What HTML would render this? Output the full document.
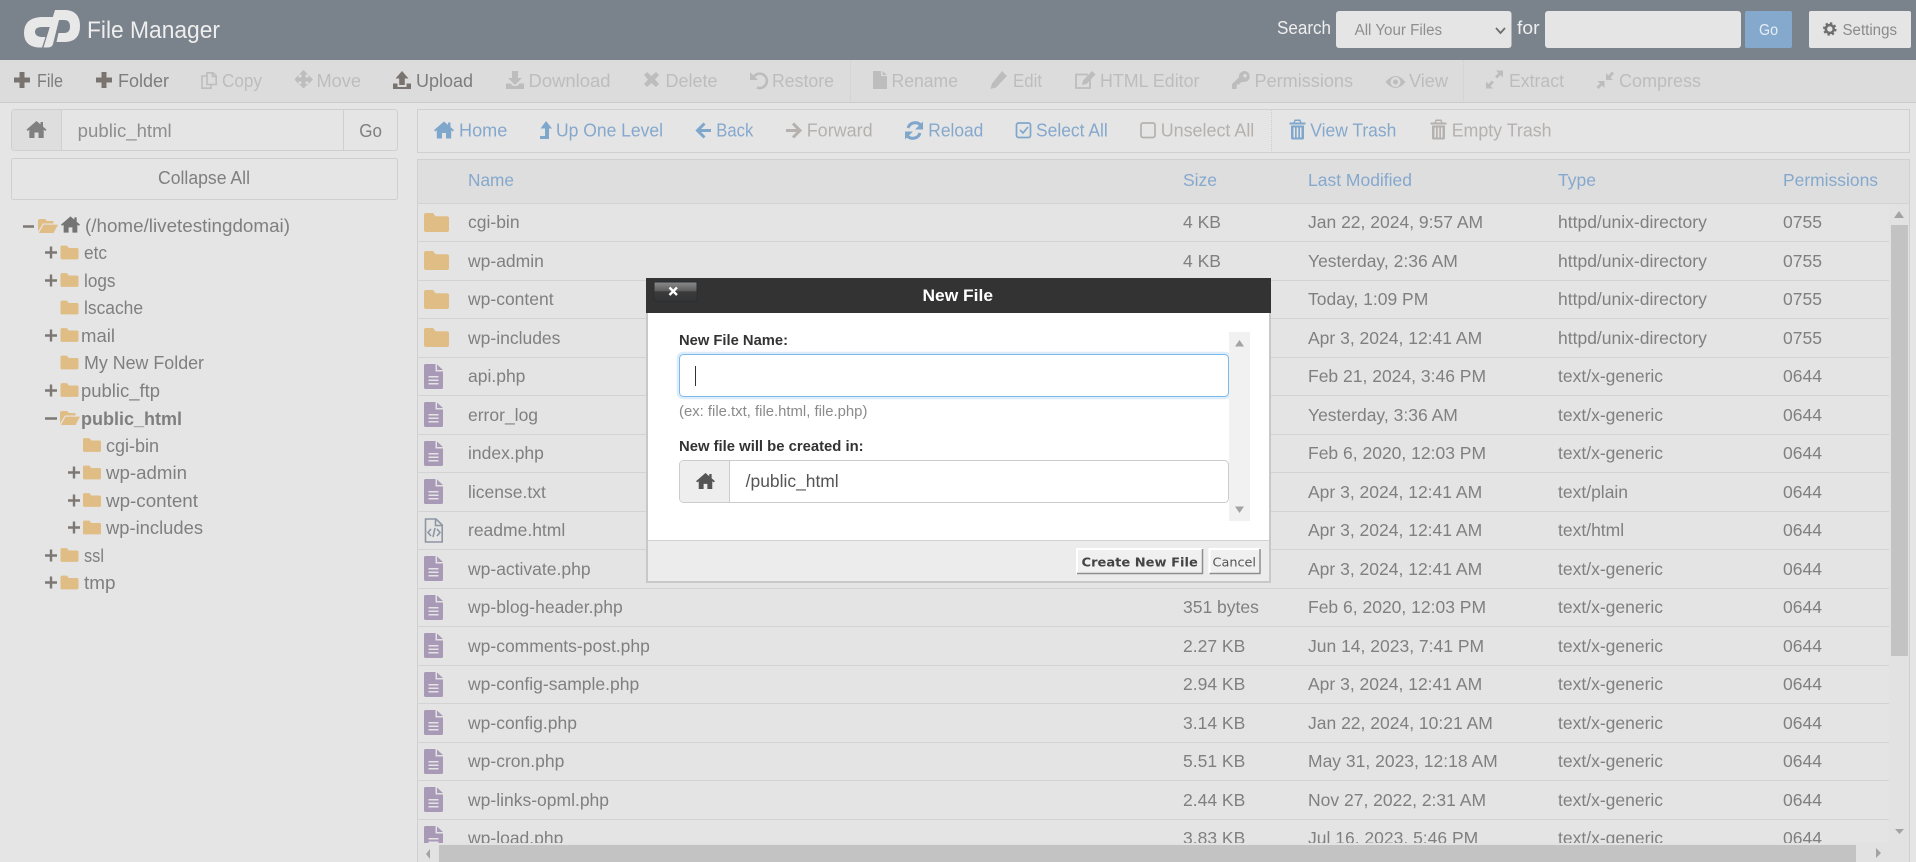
<!DOCTYPE html>
<html lang="en"><head><meta charset="utf-8"><title>File Manager</title>
<style>
html,body{margin:0;padding:0;width:1916px;height:862px;overflow:hidden;background:#e5e5e5}
svg{display:block}
text{font-family:"Liberation Sans",Arial,sans-serif;white-space:pre}
.t{font-size:18px}
.tb{fill:#7d7d7d}.dis{fill:#bdbdbd}.lnk{fill:#85a8cd}.lg{fill:#b4b1ae}
.r{font-size:17.5px;fill:#808080}
.h{font-size:17.5px;fill:#85a8cd}
.tr{font-size:18px;fill:#7f7f7f}
</style></head><body>
<svg xmlns="http://www.w3.org/2000/svg" width="1916" height="862" viewBox="0 0 1916 862">
<defs>
<symbol id="home" viewBox="0 0 20 17"><path d="M10 0L0 8.6 1.2 10 2.8 8.7V17H8V11.5H12V17H17.2V8.7L18.8 10 20 8.6 16.5 5.6V1H14V3.4Z"/></symbol>
<symbol id="file" viewBox="0 0 19 25"><path fill-rule="evenodd" d="M1.5 0H11.5V7.5H19V23.5A1.5 1.5 0 0 1 17.5 25H1.5A1.5 1.5 0 0 1 0 23.5V1.5A1.5 1.5 0 0 1 1.5 0ZM4.5 12V13.5H14.5V12ZM4.5 15.5V17H14.5V15.5ZM4.5 19V20.5H14.5V19Z"/><path d="M13 0.5L19 6H13Z"/></symbol>
<symbol id="folder" viewBox="0 0 25 19"><path d="M2 0H9L11.5 3.2H23A2 2 0 0 1 25 5.2V17A2 2 0 0 1 23 19H2A2 2 0 0 1 0 17V2A2 2 0 0 1 2 0Z"/></symbol>
<symbol id="ofolder" viewBox="0 0 20 14"><path d="M0 2Q0 0 2 0H7L9 2H15.5V4.5H5L0 12.5Z"/><path d="M5.6 5.6H20L15.5 14H0.8Z"/></symbol>
<symbol id="plus" viewBox="0 0 16 16"><path d="M5.5 0H10.5V5.5H16V10.5H10.5V16H5.5V10.5H0V5.5H5.5Z"/></symbol>
<symbol id="trash" viewBox="0 0 16 20"><path fill-rule="evenodd" d="M5 0H11L12 3H16V5H0V3H4ZM6 1.5L5.6 3H10.4L10 1.5ZM1.5 6H14.5V18.5Q14.5 20 13 20H3Q1.5 20 1.5 18.5ZM4 8V18H5.5V8ZM7.2 8V18H8.8V8ZM10.5 8V18H12V8Z"/></symbol>
<clipPath id="tc"><rect x="418" y="204" width="1471" height="639"/></clipPath>
</defs>

<!-- page -->
<rect width="1916" height="862" fill="#e5e5e5"/>

<!-- top bar -->
<rect width="1916" height="60" fill="#7a828c"/>
<g fill="#e8e8e8">
<path d="M56 17H41Q24 18 24 33Q24 46 38 47.5H42L45.5 37H41Q35 36 35 32Q35 27 42 27H53Z"/>
<path d="M55 10H66Q80 11 80 26Q80 41 66 42H56.5L58.5 33H64Q70 33 70 26.5Q70 20 64 20H59L53 44Q52 47.5 48 47.5H43.5Z"/>
</g>
<text x="87" y="38" font-size="24" fill="#eeeeee" textLength="133" lengthAdjust="spacingAndGlyphs">File Manager</text>
<text x="1277" y="34" font-size="18" fill="#eeeeee" textLength="54" lengthAdjust="spacingAndGlyphs">Search</text>
<rect x="1336" y="11" width="175.500" height="37" rx="3" fill="#e5e5e5"/>
<text x="1354.600" y="35" font-size="15.500" fill="#8e8e8e" textLength="87.500" lengthAdjust="spacingAndGlyphs">All Your Files</text>
<path d="M1496 28L1500.500 33 1505 28" fill="none" stroke="#6e6e6e" stroke-width="1.800"/>
<text x="1517" y="34" font-size="18" fill="#eeeeee" textLength="22.500" lengthAdjust="spacingAndGlyphs">for</text>
<rect x="1545" y="11" width="196" height="37" rx="3" fill="#e5e5e5"/>
<rect x="1745" y="11" width="47" height="37" rx="2" fill="#84a9cc"/>
<text x="1759" y="35" font-size="15.500" fill="#e6eef5" textLength="19" lengthAdjust="spacingAndGlyphs">Go</text>
<rect x="1809" y="11" width="102" height="37" rx="2" fill="#e5e5e5"/>
<g fill="none" stroke="#6f6f6f"><circle cx="1829.800" cy="29" r="4" stroke-width="2.600"/><circle cx="1829.800" cy="29" r="5.800" stroke-width="2" stroke-dasharray="2.300 2.250"/></g>
<text x="1842.500" y="35" font-size="15.500" fill="#8a8a8a" textLength="54.500" lengthAdjust="spacingAndGlyphs">Settings</text>

<!-- toolbar -->
<rect y="60" width="1916" height="42" fill="#dcdcdc"/>
<rect y="102" width="1916" height="1" fill="#cbcbcb"/>
<path d="M850.500 60V102M1463.500 60V102" stroke="#cdcdcd" stroke-dasharray="1 1"/>
<g class="t">
<g fill="#7a7471"><use href="#plus" x="14" y="72" width="16" height="16"/><use href="#plus" x="96" y="72" width="16" height="16"/></g>
<text class="t tb" x="37" y="87" textLength="26" lengthAdjust="spacingAndGlyphs">File</text>
<text class="t tb" x="118" y="87" textLength="51" lengthAdjust="spacingAndGlyphs">Folder</text>
<g fill="none" stroke="#bdbdbd" stroke-width="1.600"><path d="M207 72.800H213L216.200 76V84.500H207Z"/><path d="M207 76H202V88.200H211V84.500"/><path d="M212.500 73V76.500H216"/></g>
<text class="t dis" x="222" y="87" textLength="40" lengthAdjust="spacingAndGlyphs">Copy</text>
<path fill="#bdbdbd" d="M303.500 70L308 74.500H305.500V77.500H308.500V75L313 79.500 308.500 84V81.500H305.500V84H308L303.500 88.500 299 84H301.500V81.500H298.500V84L294.500 79.500 298.500 75V77.500H301.500V74.500H299Z"/>
<text class="t dis" x="316.500" y="87" textLength="44.500" lengthAdjust="spacingAndGlyphs">Move</text>
<path fill="#7a7471" d="M402 71L408.500 78.500H404.800V85H399.200V78.500H395.500ZM393 83.500H397.500V87H406.500V83.500H411V89H393Z"/>
<text class="t tb" x="416" y="87" textLength="57" lengthAdjust="spacingAndGlyphs">Upload</text>
<path fill="#bdbdbd" d="M512 71H518V78H522L515 85 508 78H512ZM506 83.500H510.500L513 86H517L519.500 83.500H524V89H506Z"/>
<text class="t dis" x="528.500" y="87" textLength="82" lengthAdjust="spacingAndGlyphs">Download</text>
<path fill="#bdbdbd" d="M647 72L651.500 76 656 72 659 75 655 79.500 659 84 656 87 651.500 83 647 87 644 84 648 79.500 644 75Z"/>
<text class="t dis" x="665.500" y="87" textLength="52" lengthAdjust="spacingAndGlyphs">Delete</text>
<path fill="none" stroke="#bdbdbd" stroke-width="2.600" d="M754 76.500A7.200 7.200 0 1 1 757 87.500"/><path fill="#bdbdbd" d="M750 72V80H758Z"/>
<text class="t dis" x="772" y="87" textLength="62" lengthAdjust="spacingAndGlyphs">Restore</text>
<path fill="#bdbdbd" d="M873 71H881V76H887V89H873ZM882.500 71L887 75H882.500Z"/>
<text class="t dis" x="891.500" y="87" textLength="66.500" lengthAdjust="spacingAndGlyphs">Rename</text>
<path fill="#bdbdbd" d="M1002 71L1007 76 996 87.500 990.500 89 992 83.500Z"/>
<text class="t dis" x="1013" y="87" textLength="29" lengthAdjust="spacingAndGlyphs">Edit</text>
<path fill="none" stroke="#bdbdbd" stroke-width="1.800" d="M1088 74.500H1076V88H1090V79"/><path fill="#bdbdbd" d="M1092 71L1095.500 74.500 1086.500 84 1082 85 1083 80.500Z"/>
<text class="t dis" x="1100" y="87" textLength="99.500" lengthAdjust="spacingAndGlyphs">HTML Editor</text>
<path fill="#bdbdbd" fill-rule="evenodd" d="M1244.500 71A5.500 5.500 0 0 1 1244 82H1241.500L1239 84.500H1237L1236.500 89H1232V84L1238.800 77.500A6 6 0 0 1 1244.500 71ZM1245 74A1.800 1.800 0 1 0 1245 77.600 1.800 1.800 0 0 0 1245 74Z"/>
<text class="t dis" x="1254.500" y="87" textLength="98.500" lengthAdjust="spacingAndGlyphs">Permissions</text>
<path fill="#bdbdbd" fill-rule="evenodd" d="M1385.500 82Q1395.500 70 1405.500 82 1395.500 94 1385.500 82ZM1395.500 77A5 5 0 1 0 1395.500 87 5 5 0 0 0 1395.500 77Z"/><circle cx="1395.500" cy="82" r="2.500" fill="#bdbdbd"/>
<text class="t dis" x="1409" y="87" textLength="39" lengthAdjust="spacingAndGlyphs">View</text>
<path fill="#bdbdbd" d="M1503 70.500V77.500L1500.500 75 1497 78.500 1495 76.500 1498.500 73 1496 70.500ZM1486 88.500V81.500L1488.500 84 1492 80.500 1494 82.500 1490.500 86 1493 88.500Z"/>
<text class="t dis" x="1509" y="87" textLength="55" lengthAdjust="spacingAndGlyphs">Extract</text>
<path fill="#bdbdbd" d="M1606 80V73L1608.500 75.500 1612 71.500 1614 73.500 1610.500 77.500 1613 80ZM1604.500 81V88L1602 85.500 1598.500 89 1596.500 87 1600 83.500 1597.500 81Z"/>
<text class="t dis" x="1619" y="87" textLength="82" lengthAdjust="spacingAndGlyphs">Compress</text>
</g>

<!-- path box -->
<rect x="11.500" y="109.500" width="386" height="41" rx="3" fill="#e5e5e5" stroke="#cfcfcf"/>
<path d="M14.500 110H61.500V150H14.500Q12 150 12 147V113Q12 110 14.500 110Z" fill="#dedede"/>
<path d="M61.500 110V150M343.500 110V150" stroke="#cfcfcf"/>
<use href="#home" x="26.500" y="121" width="20" height="17" fill="#808080"/>
<text class="t" x="77.700" y="137" fill="#8e8e8e" textLength="94" lengthAdjust="spacingAndGlyphs">public_html</text>
<text class="t" x="359.300" y="137" fill="#7f7f7f" textLength="22.700" lengthAdjust="spacingAndGlyphs">Go</text>
<rect x="11.500" y="158.500" width="386" height="41" rx="2" fill="#e5e5e5" stroke="#cfcfcf"/>
<text class="t" x="158" y="184" fill="#7f7f7f" textLength="92" lengthAdjust="spacingAndGlyphs">Collapse All</text>

<!-- tree -->
<g fill="#e0bd85">
<use href="#ofolder" x="38" y="219" width="20" height="14"/>
<use href="#folder" x="60.500" y="245.500" width="18" height="14"/>
<use href="#folder" x="60.500" y="273" width="18" height="14"/>
<use href="#folder" x="60.500" y="300.500" width="18" height="14"/>
<use href="#folder" x="60.500" y="328" width="18" height="14"/>
<use href="#folder" x="60.500" y="355.500" width="18" height="14"/>
<use href="#folder" x="60.500" y="383" width="18" height="14"/>
<use href="#ofolder" x="60" y="411" width="20" height="14"/>
<use href="#folder" x="83" y="438" width="18" height="14"/>
<use href="#folder" x="83" y="465.500" width="18" height="14"/>
<use href="#folder" x="83" y="493" width="18" height="14"/>
<use href="#folder" x="83" y="520.500" width="18" height="14"/>
<use href="#folder" x="60.500" y="548" width="18" height="14"/>
<use href="#folder" x="60.500" y="575.500" width="18" height="14"/>
</g>
<use href="#home" x="61" y="216" width="19" height="17" fill="#747474"/>
<g stroke="#7d7874" stroke-width="2.400" fill="none">
<path d="M23 226.500H34M45 418.500H57"/>
<path d="M45 252.500H57M51 246.500V258.500M45 280.500H57M51 274.500V286.500M45 335.500H57M51 329.500V341.500M45 390.500H57M51 384.500V396.500M45 555.500H57M51 549.500V561.500M45 582.500H57M51 576.500V588.500"/>
<path d="M68 472.500H80M74 466.500V478.500M68 500.500H80M74 494.500V506.500M68 527.500H80M74 521.500V533.500"/>
</g>
<text class="tr" x="85" y="232" textLength="205" lengthAdjust="spacingAndGlyphs">(/home/livetestingdomai)</text>
<text class="tr" x="84" y="259" textLength="23" lengthAdjust="spacingAndGlyphs">etc</text>
<text class="tr" x="84" y="287" textLength="31.500" lengthAdjust="spacingAndGlyphs">logs</text>
<text class="tr" x="84" y="314" textLength="59" lengthAdjust="spacingAndGlyphs">lscache</text>
<text class="tr" x="81" y="342" textLength="34" lengthAdjust="spacingAndGlyphs">mail</text>
<text class="tr" x="84" y="369" textLength="120" lengthAdjust="spacingAndGlyphs">My New Folder</text>
<text class="tr" x="81" y="397" textLength="79" lengthAdjust="spacingAndGlyphs">public_ftp</text>
<text class="tr" x="81" y="425" font-weight="bold" textLength="101" lengthAdjust="spacingAndGlyphs">public_html</text>
<text class="tr" x="106" y="452" textLength="53" lengthAdjust="spacingAndGlyphs">cgi-bin</text>
<text class="tr" x="106" y="479" textLength="81" lengthAdjust="spacingAndGlyphs">wp-admin</text>
<text class="tr" x="106" y="507" textLength="92" lengthAdjust="spacingAndGlyphs">wp-content</text>
<text class="tr" x="106" y="534" textLength="97" lengthAdjust="spacingAndGlyphs">wp-includes</text>
<text class="tr" x="84" y="562" textLength="20" lengthAdjust="spacingAndGlyphs">ssl</text>
<text class="tr" x="84" y="589" textLength="31.500" lengthAdjust="spacingAndGlyphs">tmp</text>

<!-- action bar -->
<rect x="417.500" y="109.500" width="1492" height="43" fill="#e5e5e5" stroke="#d0d0d0"/>
<path d="M1271.500 110V152" stroke="#cdcdcd" stroke-dasharray="1 1"/>
<use href="#home" x="434" y="121.500" width="20" height="17" fill="#7fa7cc"/>
<text class="t lnk" x="459" y="136.500" textLength="48.300" lengthAdjust="spacingAndGlyphs">Home</text>
<path fill="#7fa7cc" d="M546 121L552 128.500H549V139H540V136H545V128.500H540.500Z"/>
<text class="t lnk" x="556" y="136.500" textLength="107" lengthAdjust="spacingAndGlyphs">Up One Level</text>
<path fill="none" stroke="#7fa7cc" stroke-width="3" d="M711 130.500H698M704.500 123.500L697.500 130.500 704.500 137.500"/>
<text class="t lnk" x="716.300" y="136.500" textLength="37" lengthAdjust="spacingAndGlyphs">Back</text>
<path fill="none" stroke="#b4b1ae" stroke-width="3" d="M786 130.500H799.500M793 123.500L800 130.500 793 137.500"/>
<text class="t lg" x="806.700" y="136.500" textLength="66" lengthAdjust="spacingAndGlyphs">Forward</text>
<path fill="none" stroke="#7fa7cc" stroke-width="3" d="M908 128A7.500 7.500 0 0 1 921 125.500M920 133A7.500 7.500 0 0 1 907 135.500"/>
<path fill="#7fa7cc" d="M923 121.500V129.500H915ZM905 139.500V131.500H913Z"/>
<text class="t lnk" x="928.300" y="136.500" textLength="55" lengthAdjust="spacingAndGlyphs">Reload</text>
<rect x="1016.500" y="123" width="14" height="14.500" rx="2" fill="none" stroke="#7fa7cc" stroke-width="1.700"/>
<path d="M1020 130L1023 133 1028 127" fill="none" stroke="#7fa7cc" stroke-width="1.700"/>
<text class="t lnk" x="1036" y="136.500" textLength="71.700" lengthAdjust="spacingAndGlyphs">Select All</text>
<rect x="1141" y="123" width="14" height="14.500" rx="2" fill="none" stroke="#b4b1ae" stroke-width="1.700"/>
<text class="t lg" x="1160.700" y="136.500" textLength="93.600" lengthAdjust="spacingAndGlyphs">Unselect All</text>
<use href="#trash" x="1289.500" y="119.500" width="16" height="20" fill="#7fa7cc"/>
<text class="t lnk" x="1310.300" y="136.500" textLength="86" lengthAdjust="spacingAndGlyphs">View Trash</text>
<use href="#trash" x="1430.500" y="119.500" width="16" height="20" fill="#b4b1ae"/>
<text class="t lg" x="1451.700" y="136.500" textLength="99.800" lengthAdjust="spacingAndGlyphs">Empty Trash</text>

<!-- table -->
<rect x="417.500" y="159.500" width="1492" height="702" fill="#e4e4e4" stroke="#d0d0d0"/>
<rect x="418" y="160" width="1491" height="43" fill="#dedede"/>
<text class="h" x="468" y="186" textLength="46" lengthAdjust="spacingAndGlyphs">Name</text>
<text class="h" x="1183" y="186">Size</text>
<text class="h" x="1308" y="186" textLength="104" lengthAdjust="spacingAndGlyphs">Last Modified</text>
<text class="h" x="1558" y="186">Type</text>
<text class="h" x="1783" y="186" textLength="95" lengthAdjust="spacingAndGlyphs">Permissions</text>
<path stroke="#d3d3d3" d="M418 203.500H1909M418 241.500H1889M418 280.500H1889M418 318.500H1889M418 357.500H1889M418 395.500H1889M418 434.500H1889M418 472.500H1889M418 511.500H1889M418 549.500H1889M418 588.500H1889M418 626.500H1889M418 665.500H1889M418 703.500H1889M418 742.500H1889M418 780.500H1889M418 819.500H1889"/>
<g clip-path="url(#tc)">
<g fill="#e0bd85">
<use href="#folder" x="424" y="213" width="25" height="19"/>
<use href="#folder" x="424" y="251" width="25" height="19"/>
<use href="#folder" x="424" y="290" width="25" height="19"/>
<use href="#folder" x="424" y="328" width="25" height="19"/>
</g>
<g fill="#a899b6">
<use href="#file" x="424" y="364" width="19" height="25"/>
<use href="#file" x="424" y="402" width="19" height="25"/>
<use href="#file" x="424" y="441" width="19" height="25"/>
<use href="#file" x="424" y="479" width="19" height="25"/>
<use href="#file" x="424" y="556" width="19" height="25"/>
<use href="#file" x="424" y="595" width="19" height="25"/>
<use href="#file" x="424" y="633" width="19" height="25"/>
<use href="#file" x="424" y="672" width="19" height="25"/>
<use href="#file" x="424" y="710" width="19" height="25"/>
<use href="#file" x="424" y="749" width="19" height="25"/>
<use href="#file" x="424" y="787" width="19" height="25"/>
<use href="#file" x="424" y="826" width="19" height="25"/>
</g>
<g fill="none" stroke="#8d97a3" stroke-width="1.600">
<path d="M425.500 519H436L442.200 525V542H425.500Z"/><path d="M435.500 519V525.500H442"/>
<path d="M431 529L428 532.500 431 536M437 529L440 532.500 437 536M435 528L433 537"/>
</g>
<g class="r">
<text class="r" x="468" y="228">cgi-bin</text><text class="r" x="468" y="267">wp-admin</text><text class="r" x="468" y="305">wp-content</text><text class="r" x="468" y="344">wp-includes</text><text class="r" x="468" y="382">api.php</text><text class="r" x="468" y="421">error_log</text><text class="r" x="468" y="459">index.php</text><text class="r" x="468" y="498">license.txt</text><text class="r" x="468" y="536">readme.html</text><text class="r" x="468" y="575">wp-activate.php</text><text class="r" x="468" y="613">wp-blog-header.php</text><text class="r" x="468" y="652">wp-comments-post.php</text><text class="r" x="468" y="690">wp-config-sample.php</text><text class="r" x="468" y="729">wp-config.php</text><text class="r" x="468" y="767">wp-cron.php</text><text class="r" x="468" y="806">wp-links-opml.php</text><text class="r" x="468" y="844">wp-load.php</text>
<text class="r" x="1183" y="228">4 KB</text><text class="r" x="1183" y="267">4 KB</text><text class="r" x="1183" y="613">351 bytes</text><text class="r" x="1183" y="652">2.27 KB</text><text class="r" x="1183" y="690">2.94 KB</text><text class="r" x="1183" y="729">3.14 KB</text><text class="r" x="1183" y="767">5.51 KB</text><text class="r" x="1183" y="806">2.44 KB</text><text class="r" x="1183" y="844">3.83 KB</text>
<text class="r" x="1308" y="228">Jan 22, 2024, 9:57 AM</text><text class="r" x="1308" y="267">Yesterday, 2:36 AM</text><text class="r" x="1308" y="305">Today, 1:09 PM</text><text class="r" x="1308" y="344">Apr 3, 2024, 12:41 AM</text><text class="r" x="1308" y="382">Feb 21, 2024, 3:46 PM</text><text class="r" x="1308" y="421">Yesterday, 3:36 AM</text><text class="r" x="1308" y="459">Feb 6, 2020, 12:03 PM</text><text class="r" x="1308" y="498">Apr 3, 2024, 12:41 AM</text><text class="r" x="1308" y="536">Apr 3, 2024, 12:41 AM</text><text class="r" x="1308" y="575">Apr 3, 2024, 12:41 AM</text><text class="r" x="1308" y="613">Feb 6, 2020, 12:03 PM</text><text class="r" x="1308" y="652">Jun 14, 2023, 7:41 PM</text><text class="r" x="1308" y="690">Apr 3, 2024, 12:41 AM</text><text class="r" x="1308" y="729">Jan 22, 2024, 10:21 AM</text><text class="r" x="1308" y="767">May 31, 2023, 12:18 AM</text><text class="r" x="1308" y="806">Nov 27, 2022, 2:31 AM</text><text class="r" x="1308" y="844">Jul 16, 2023, 5:46 PM</text>
<text class="r" x="1558" y="228">httpd/unix-directory</text><text class="r" x="1558" y="267">httpd/unix-directory</text><text class="r" x="1558" y="305">httpd/unix-directory</text><text class="r" x="1558" y="344">httpd/unix-directory</text><text class="r" x="1558" y="382">text/x-generic</text><text class="r" x="1558" y="421">text/x-generic</text><text class="r" x="1558" y="459">text/x-generic</text><text class="r" x="1558" y="498">text/plain</text><text class="r" x="1558" y="536">text/html</text><text class="r" x="1558" y="575">text/x-generic</text><text class="r" x="1558" y="613">text/x-generic</text><text class="r" x="1558" y="652">text/x-generic</text><text class="r" x="1558" y="690">text/x-generic</text><text class="r" x="1558" y="729">text/x-generic</text><text class="r" x="1558" y="767">text/x-generic</text><text class="r" x="1558" y="806">text/x-generic</text><text class="r" x="1558" y="844">text/x-generic</text>
<text class="r" x="1783" y="228">0755</text><text class="r" x="1783" y="267">0755</text><text class="r" x="1783" y="305">0755</text><text class="r" x="1783" y="344">0755</text><text class="r" x="1783" y="382">0644</text><text class="r" x="1783" y="421">0644</text><text class="r" x="1783" y="459">0644</text><text class="r" x="1783" y="498">0644</text><text class="r" x="1783" y="536">0644</text><text class="r" x="1783" y="575">0644</text><text class="r" x="1783" y="613">0644</text><text class="r" x="1783" y="652">0644</text><text class="r" x="1783" y="690">0644</text><text class="r" x="1783" y="729">0644</text><text class="r" x="1783" y="767">0644</text><text class="r" x="1783" y="806">0644</text><text class="r" x="1783" y="844">0644</text>
</g>
</g>

<!-- table scrollbars -->
<rect x="1889" y="204" width="20" height="658" fill="#e2e2e2"/>
<rect x="418" y="843" width="1491" height="19" fill="#e2e2e2"/>
<rect x="1891" y="225" width="17" height="431" fill="#c3c3c3"/>
<rect x="439" y="845" width="1417" height="17" fill="#c3c3c3"/>
<path fill="#a3a3a3" d="M1899 211L1904 218H1894ZM1895 829H1904L1899.500 834ZM430 849V859L426 854ZM1876 848V858L1881 853Z"/>

<!-- modal -->
<rect x="646" y="278" width="625" height="305" fill="#c8c8c8"/>
<rect x="648" y="313" width="621" height="268" fill="#ffffff"/>
<rect x="648" y="540" width="621" height="41" fill="#ececec"/>
<rect x="648" y="540" width="621" height="1" fill="#d2d2d2"/>
<rect x="646" y="278" width="625" height="35" fill="#333333"/>
<defs><linearGradient id="cg" x1="0" y1="0" x2="0" y2="1"><stop offset="0" stop-color="#8c8c8c"/><stop offset=".45" stop-color="#5e5e5e"/><stop offset=".5" stop-color="#3c3c3c"/><stop offset="1" stop-color="#333333"/></linearGradient></defs>
<path d="M654 282H697V298Q697 301.500 694 301.500H657Q654 301.500 654 298Z" fill="url(#cg)" stroke="#2a2f33"/>
<path d="M669.500 287.500L677 295M677 287.500L669.500 295" stroke="#ffffff" stroke-width="2.300"/>
<text x="922.500" y="301" font-size="17" font-weight="bold" fill="#ffffff" textLength="70.500" lengthAdjust="spacingAndGlyphs">New File</text>
<text x="679" y="345" font-size="14.700" font-weight="bold" fill="#333333" textLength="109" lengthAdjust="spacingAndGlyphs">New File Name:</text>
<rect x="678" y="353" width="552" height="45" rx="5" fill="none" stroke="#66afe9" stroke-opacity=".22" stroke-width="2.500"/>
<rect x="679.500" y="354.500" width="549" height="42" rx="4" fill="#ffffff" stroke="#7db9ea" stroke-width="1"/>
<rect x="695" y="366" width="1" height="20" fill="#333333"/>
<text x="679" y="416" font-size="14.500" fill="#8a8a8a" textLength="188.400" lengthAdjust="spacingAndGlyphs">(ex: file.txt, file.html, file.php)</text>
<text x="679" y="451" font-size="14.700" font-weight="bold" fill="#333333" textLength="184.600" lengthAdjust="spacingAndGlyphs">New file will be created in:</text>
<rect x="679.500" y="460.500" width="549" height="42" rx="4" fill="#ffffff" stroke="#cccccc"/>
<path d="M683.500 461H729.500V502H683.500Q680 502 680 498.500V464.500Q680 461 683.500 461Z" fill="#eeeeee"/>
<path d="M729.500 461V502" stroke="#cccccc"/>
<use href="#home" x="695" y="473" width="21" height="16" fill="#555555"/>
<text x="745.700" y="487" font-size="17.300" fill="#555555" textLength="93" lengthAdjust="spacingAndGlyphs">/public_html</text>
<rect x="1229" y="332" width="21" height="189" fill="#f1f1f1"/>
<path fill="#a3a3a3" d="M1239.500 340L1244 346.500H1235ZM1235 506.500H1244L1239.500 513Z"/>
<rect x="1077" y="549" width="126" height="25" fill="#f0f0f0"/>
<path d="M1077 574V549H1203" fill="none" stroke="#ffffff" stroke-width="2"/>
<path d="M1077 573.500H1202.500V549" fill="none" stroke="#8e8e8e" stroke-width="1.500"/>
<text x="1081.500" y="566.300" font-size="12.500" font-weight="bold" fill="#444444" style="font-family:'DejaVu Sans',sans-serif" textLength="116.300" lengthAdjust="spacingAndGlyphs">Create New File</text>
<rect x="1209.500" y="549" width="51" height="25" fill="#f0f0f0"/>
<path d="M1209.500 574V549H1260.500" fill="none" stroke="#ffffff" stroke-width="2"/>
<path d="M1209.500 573.500H1260V549" fill="none" stroke="#8e8e8e" stroke-width="1.500"/>
<text x="1212.500" y="566.300" font-size="12.500" fill="#555555" style="font-family:'DejaVu Sans',sans-serif" textLength="43.500" lengthAdjust="spacingAndGlyphs">Cancel</text>
</svg>
</body></html>
